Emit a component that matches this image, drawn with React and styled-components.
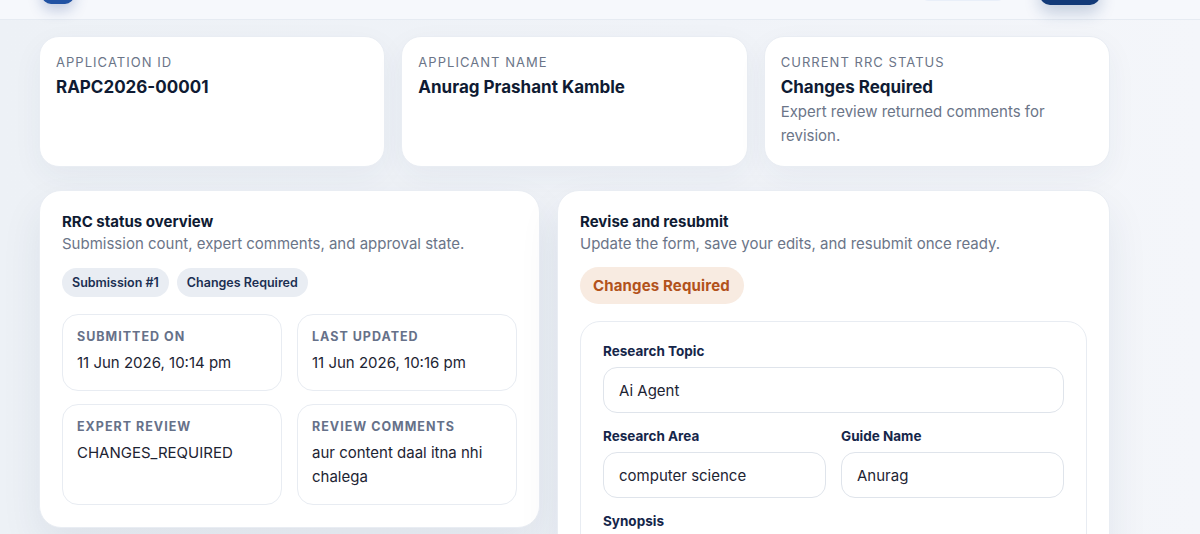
import React from "react";
import styled, { createGlobalStyle } from "styled-components";

const Global = createGlobalStyle`
  html, body { margin: 0; padding: 0; }
  body {
    background: #eef2f7;
    font-family: Inter, "Noto Sans", "Liberation Sans", sans-serif;
    color: #0f1b33;
    overflow: hidden;
  }
  * { box-sizing: border-box; }
`;

const Page = styled.div`
  min-height: 534px;
  background: linear-gradient(90deg, #edf1f6 0%, #f0f3f8 60%, #f4f6fa 100%);
`;

const TopBar = styled.header`
  height: 64px;
  margin-top: -44px;
  background: #f6f8fc;
  border-bottom: 1px solid #e6ebf2;
  display: flex;
  align-items: center;
  padding: 0 100px 0 42px;
`;

const LogoMark = styled.div`
  width: 32px;
  height: 32px;
  border-radius: 9px;
  background: #2152a3;
  box-shadow: 0 6px 14px rgba(30, 64, 140, 0.25);
`;

const Spacer = styled.div`
  flex: 1;
`;

const GhostPill = styled.div`
  width: 88px;
  height: 30px;
  border-radius: 10px;
  background: #e9eff9;
  margin-right: 33px;
  margin-bottom: 4px;
`;

const PrimaryBtn = styled.div`
  width: 60px;
  height: 34px;
  border-radius: 10px;
  background: #123a78;
  box-shadow: 0 8px 16px rgba(18, 58, 120, 0.22);
`;

const Main = styled.main`
  width: 1071px;
  margin-left: 39px;
  padding-top: 16px;
  display: flex;
  flex-direction: column;
  gap: 23px;
`;

const SummaryRow = styled.div`
  display: grid;
  grid-template-columns: repeat(3, minmax(0, 1fr));
  gap: 16px;
`;

const SummaryCard = styled.div`
  height: 131px;
  background: #ffffff;
  border: 1px solid #e9edf3;
  border-radius: 20px;
  padding: 16px 16px 0;
  box-shadow: 0 10px 30px rgba(30, 50, 90, 0.05);
`;

const Eyebrow = styled.div`
  font-size: 13px;
  letter-spacing: 0.08em;
  text-transform: uppercase;
  color: #6b7588;
  line-height: 18px;
`;

const BigValue = styled.div`
  margin-top: 5px;
  font-size: 17px;
  font-weight: 700;
  color: #0f1b33;
  line-height: 22px;
`;

const Note = styled.div`
  margin-top: 2px;
  font-size: 15px;
  line-height: 24px;
  color: #6b7588;
  max-width: 290px;
`;

const PanelRow = styled.div`
  display: grid;
  grid-template-columns: minmax(0, 501fr) minmax(0, 553fr);
  gap: 17px;
  align-items: start;
`;

const Panel = styled.section`
  background: #ffffff;
  border: 1px solid #e9edf3;
  border-radius: 22px;
  padding: 21px 22px 22px;
  box-shadow: 0 18px 40px rgba(30, 50, 90, 0.08);
  ${(p) => p.$tall && "min-height: 360px;"}
`;

const PanelTitle = styled.h3`
  margin: 0;
  font-size: 15px;
  font-weight: 700;
  line-height: 20px;
  color: #0f1b33;
`;

const PanelSub = styled.p`
  margin: 1px 0 0;
  font-size: 15px;
  line-height: 22px;
  color: #6b7588;
`;

const ChipRow = styled.div`
  display: flex;
  gap: 8px;
  margin-top: 13px;
`;

const Chip = styled.span`
  display: inline-flex;
  align-items: center;
  height: 29px;
  padding: 0 10px;
  border-radius: 999px;
  background: #e9edf3;
  color: #1b2f52;
  font-size: 12.5px;
  font-weight: 600;
`;

const StatGrid = styled.div`
  display: grid;
  grid-template-columns: minmax(0, 1fr) minmax(0, 1fr);
  column-gap: 15px;
  row-gap: 13px;
  margin-top: 17px;
`;

const StatBox = styled.div`
  border: 1px solid #e8ecf2;
  border-radius: 16px;
  padding: 14px 14px 13px;
  min-height: ${(p) => p.$h}px;
`;

const StatLabel = styled.div`
  font-size: 12.5px;
  font-weight: 700;
  letter-spacing: 0.08em;
  text-transform: uppercase;
  color: #667189;
  line-height: 16px;
`;

const StatValue = styled.div`
  margin-top: 6px;
  font-size: 15px;
  line-height: 24px;
  color: #1d2433;
`;

const StatusBadge = styled.span`
  display: inline-flex;
  align-items: center;
  height: 37px;
  padding: 0 14px 0 13px;
  margin-top: 12px;
  border-radius: 999px;
  background: #f8ebe1;
  color: #b2521b;
  font-size: 15px;
  font-weight: 700;
  letter-spacing: 0.01em;
`;

const FormBox = styled.div`
  margin-top: 17px;
  border: 1px solid #e8ecf2;
  border-radius: 20px;
  padding: 20px 22px 8px;
  display: grid;
  grid-template-columns: minmax(0, 1fr) minmax(0, 1fr);
  column-gap: 15px;
  row-gap: 14px;
`;

const Field = styled.label`
  display: flex;
  flex-direction: column;
  gap: 7px;
  min-width: 0;
  grid-column: ${(p) => (p.$wide ? "1 / -1" : "auto")};
`;

const FieldLabel = styled.span`
  font-size: 13.5px;
  font-weight: 700;
  color: #15264a;
  line-height: 18px;
`;

const TextInput = styled.input`
  width: 100%;
  min-width: 0;
  height: 46px;
  border: 1px solid #dfe4eb;
  border-radius: 14px;
  padding: 0 15px;
  font-family: inherit;
  font-size: 15px;
  color: #1d2433;
  background: #ffffff;
  outline: none;
`;

const stats = [
  { label: "Submitted on", value: "11 Jun 2026, 10:14 pm", h: 77 },
  { label: "Last updated", value: "11 Jun 2026, 10:16 pm", h: 77 },
  { label: "Expert review", value: "CHANGES_REQUIRED", h: 101 },
  { label: "Review comments", value: "aur content daal itna nhi chalega", h: 101 },
];

export default function App() {
  return (
    <Page>
      <Global />
      <TopBar>
        <LogoMark />
        <Spacer />
        <GhostPill />
        <PrimaryBtn />
      </TopBar>
      <Main>
        <SummaryRow>
          <SummaryCard>
            <Eyebrow>Application ID</Eyebrow>
            <BigValue>RAPC2026-00001</BigValue>
          </SummaryCard>
          <SummaryCard>
            <Eyebrow>Applicant Name</Eyebrow>
            <BigValue>Anurag Prashant Kamble</BigValue>
          </SummaryCard>
          <SummaryCard>
            <Eyebrow>Current RRC Status</Eyebrow>
            <BigValue>Changes Required</BigValue>
            <Note>Expert review returned comments for revision.</Note>
          </SummaryCard>
        </SummaryRow>

        <PanelRow>
          <Panel>
            <PanelTitle>RRC status overview</PanelTitle>
            <PanelSub>Submission count, expert comments, and approval state.</PanelSub>
            <ChipRow>
              <Chip>Submission #1</Chip>
              <Chip>Changes Required</Chip>
            </ChipRow>
            <StatGrid>
              {stats.map((s) => (
                <StatBox key={s.label} $h={s.h}>
                  <StatLabel>{s.label}</StatLabel>
                  <StatValue>{s.value}</StatValue>
                </StatBox>
              ))}
            </StatGrid>
          </Panel>

          <Panel $tall>
            <PanelTitle>Revise and resubmit</PanelTitle>
            <PanelSub>Update the form, save your edits, and resubmit once ready.</PanelSub>
            <StatusBadge>Changes Required</StatusBadge>
            <FormBox>
              <Field $wide>
                <FieldLabel>Research Topic</FieldLabel>
                <TextInput defaultValue="Ai Agent" />
              </Field>
              <Field>
                <FieldLabel>Research Area</FieldLabel>
                <TextInput defaultValue="computer science" />
              </Field>
              <Field>
                <FieldLabel>Guide Name</FieldLabel>
                <TextInput defaultValue="Anurag" />
              </Field>
              <Field $wide>
                <FieldLabel>Synopsis</FieldLabel>
                <TextInput defaultValue="" />
              </Field>
            </FormBox>
          </Panel>
        </PanelRow>
      </Main>
    </Page>
  );
}
